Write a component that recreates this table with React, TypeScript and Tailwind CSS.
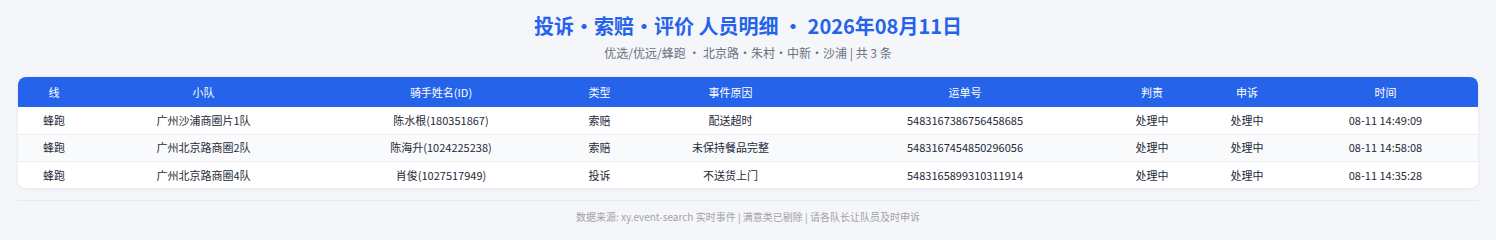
import React from 'react';

type Row = {
  line: string;
  team: string;
  rider: string;
  kind: string;
  reason: string;
  waybill: string;
  judge: string;
  appeal: string;
  time: string;
};

const rows: Row[] = [
  {
    line: '蜂跑',
    team: '广州沙浦商圈片1队',
    rider: '陈水根(180351867)',
    kind: '索赔',
    reason: '配送超时',
    waybill: '5483167386756458685',
    judge: '处理中',
    appeal: '处理中',
    time: '08-11 14:49:09',
  },
  {
    line: '蜂跑',
    team: '广州北京路商圈2队',
    rider: '陈海升(1024225238)',
    kind: '索赔',
    reason: '未保持餐品完整',
    waybill: '5483167454850296056',
    judge: '处理中',
    appeal: '处理中',
    time: '08-11 14:58:08',
  },
  {
    line: '蜂跑',
    team: '广州北京路商圈4队',
    rider: '肖俊(1027517949)',
    kind: '投诉',
    reason: '不送货上门',
    waybill: '5483165899310311914',
    judge: '处理中',
    appeal: '处理中',
    time: '08-11 14:35:28',
  },
];

// 列宽按截图里的列中心推算
const columns = [
  { title: '线', width: 'w-[72px]' },
  { title: '小队', width: 'w-[227px]' },
  { title: '骑手姓名(ID)', width: 'w-[248px]' },
  { title: '类型', width: 'w-[69px]' },
  { title: '事件原因', width: 'w-[193px]' },
  { title: '运单号', width: 'w-[276px]' },
  { title: '判责', width: 'w-[98px]' },
  { title: '申诉', width: 'w-[92px]' },
  { title: '时间', width: 'w-[185px]' },
];

export default function App() {
  return (
    <div
      className="min-h-[240px] bg-[#f4f6fa] px-[18px] pt-[11px]"
      style={{ fontFamily: '"Noto Sans CJK SC", "Noto Sans", sans-serif' }}
    >
      <h1 className="text-center text-[20px] font-bold leading-[30px] text-[#2563eb]">
        投诉・索赔・评价 人员明细 ・ 2026年08月11日
      </h1>
      <p className="mt-[3px] text-center text-[12px] leading-[18px] text-[#6b7280]">
        优选/优远/蜂跑 ・ 北京路・朱村・中新・沙浦 | 共 3 条
      </p>

      <div className="mt-[15px] overflow-hidden rounded-lg bg-white shadow-[0_1px_4px_rgba(0,0,0,0.08)]">
        <table className="w-full table-fixed border-collapse text-center text-[11px] text-[#1f2937]">
          <thead>
            <tr className="h-[30px] bg-[#2563eb] text-white">
              {columns.map((col) => (
                <th key={col.title} className={`${col.width} font-normal`}>
                  {col.title}
                </th>
              ))}
            </tr>
          </thead>
          <tbody>
            {rows.map((row, index) => (
              <tr
                key={row.waybill}
                className={`h-[27px] ${index % 2 === 1 ? 'bg-[#f8fafc]' : 'bg-white'} ${
                  index < rows.length - 1 ? 'border-b border-[#eceef2]' : ''
                }`}
              >
                <td>{row.line}</td>
                <td>{row.team}</td>
                <td>{row.rider}</td>
                <td>{row.kind}</td>
                <td>{row.reason}</td>
                <td>{row.waybill}</td>
                <td>{row.judge}</td>
                <td>{row.appeal}</td>
                <td>{row.time}</td>
              </tr>
            ))}
          </tbody>
        </table>
      </div>

      <div className="mt-[12px] border-t border-[#e8eaee] pt-[8px] text-center text-[10px] leading-[15px] text-[#a3a3a3]">
        数据来源: xy.event-search 实时事件 | 满意类已剔除 | 请各队长让队员及时申诉
      </div>
    </div>
  );
}
